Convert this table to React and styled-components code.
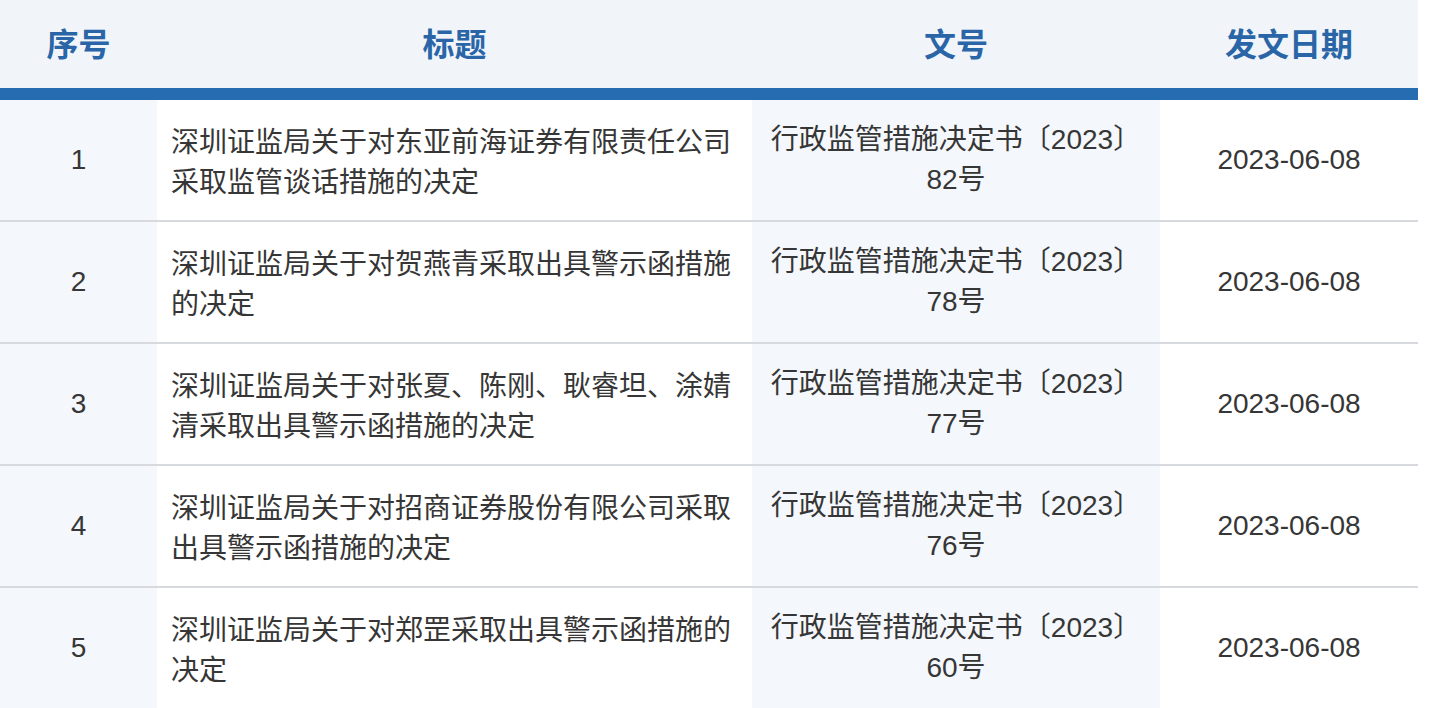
import React from "react";
import styled, { createGlobalStyle } from "styled-components";

const Global = createGlobalStyle`
  html, body { margin: 0; padding: 0; background: #ffffff; }
  body { font-family: "Liberation Sans", "Noto Sans CJK SC", sans-serif; }
`;

const Table = styled.div`
  display: grid;
  grid-template-columns: 157px 595px 408px 258px;
  width: 1418px;
`;

const HeaderCell = styled.div`
  height: 88px;
  background: #f1f5fa;
  display: flex;
  align-items: center;
  justify-content: center;
  color: #2a66a7;
  font-family: "Noto Sans CJK SC", sans-serif;
  font-weight: 700;
  font-size: 32px;
  padding-bottom: 4px;
  box-sizing: border-box;
`;

const Bar = styled.div`
  grid-column: 1 / -1;
  height: 12px;
  background: #266cb0;
`;

const Cell = styled.div`
  height: 120px;
  border-bottom: 2px solid #d6d9dd;
  background: ${(p) => (p.$shaded ? "#f4f7fb" : "#ffffff")};
  display: flex;
  flex-direction: column;
  justify-content: center;
  align-items: ${(p) => (p.$left ? "flex-start" : "center")};
  text-align: ${(p) => (p.$left ? "left" : "center")};
  padding: 0 ${(p) => (p.$left ? "14px" : "0")};
  color: #363636;
  font-size: 28px;
  line-height: 40px;
`;

const TitleText = styled.div`
  font-family: "Noto Sans CJK SC", sans-serif;
  width: 565px;
`;

const DocLine = styled.span`
  display: block;
  white-space: nowrap;
`;

const rows = [
  { no: 1, title: "深圳证监局关于对东亚前海证券有限责任公司采取监管谈话措施的决定", doc: "82号", date: "2023-06-08" },
  { no: 2, title: "深圳证监局关于对贺燕青采取出具警示函措施的决定", doc: "78号", date: "2023-06-08" },
  { no: 3, title: "深圳证监局关于对张夏、陈刚、耿睿坦、涂婧清采取出具警示函措施的决定", doc: "77号", date: "2023-06-08" },
  { no: 4, title: "深圳证监局关于对招商证券股份有限公司采取出具警示函措施的决定", doc: "76号", date: "2023-06-08" },
  { no: 5, title: "深圳证监局关于对郑罡采取出具警示函措施的决定", doc: "60号", date: "2023-06-08" },
];

export default function App() {
  return (
    <>
      <Global />
      <Table>
        <HeaderCell>序号</HeaderCell>
        <HeaderCell>标题</HeaderCell>
        <HeaderCell>文号</HeaderCell>
        <HeaderCell>发文日期</HeaderCell>
        <Bar />
        {rows.map((r) => (
          <React.Fragment key={r.no}>
            <Cell $shaded>{r.no}</Cell>
            <Cell $left>
              <TitleText>{r.title}</TitleText>
            </Cell>
            <Cell $shaded>
              <DocLine>行政监管措施决定书〔2023〕</DocLine>
              <DocLine>{r.doc}</DocLine>
            </Cell>
            <Cell>{r.date}</Cell>
          </React.Fragment>
        ))}
      </Table>
    </>
  );
}
